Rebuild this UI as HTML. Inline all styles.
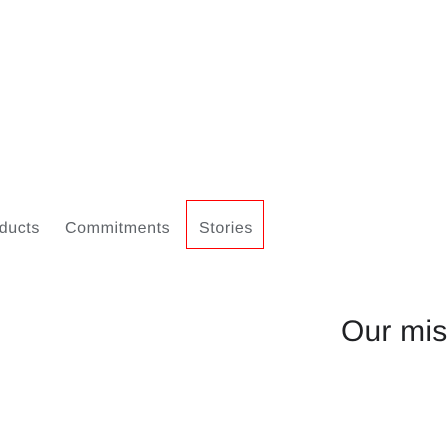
<!DOCTYPE html>
<html><head><style>
html,body{margin:0;width:448px;height:448px;overflow:hidden;background:#fff;}
body{position:relative;font-family:"Liberation Sans",sans-serif;}
.n{position:absolute;top:219px;font-size:16px;color:#5f6368;white-space:nowrap;line-height:20px;letter-spacing:0.6px}
.box{position:absolute;left:186px;top:200px;width:76px;height:47px;border:1px solid #ff0000}
.h{position:absolute;left:341px;top:312px;font-size:30px;color:#202124;white-space:nowrap;line-height:40px;letter-spacing:0.2px}
</style></head><body>
<div class="n" style="left:-28px">Products</div>
<div class="n" style="left:65px">Commitments</div>
<div class="box"></div>
<div class="n" style="left:199px">Stories</div>
<div class="h">Our miss</div>
</body></html>
